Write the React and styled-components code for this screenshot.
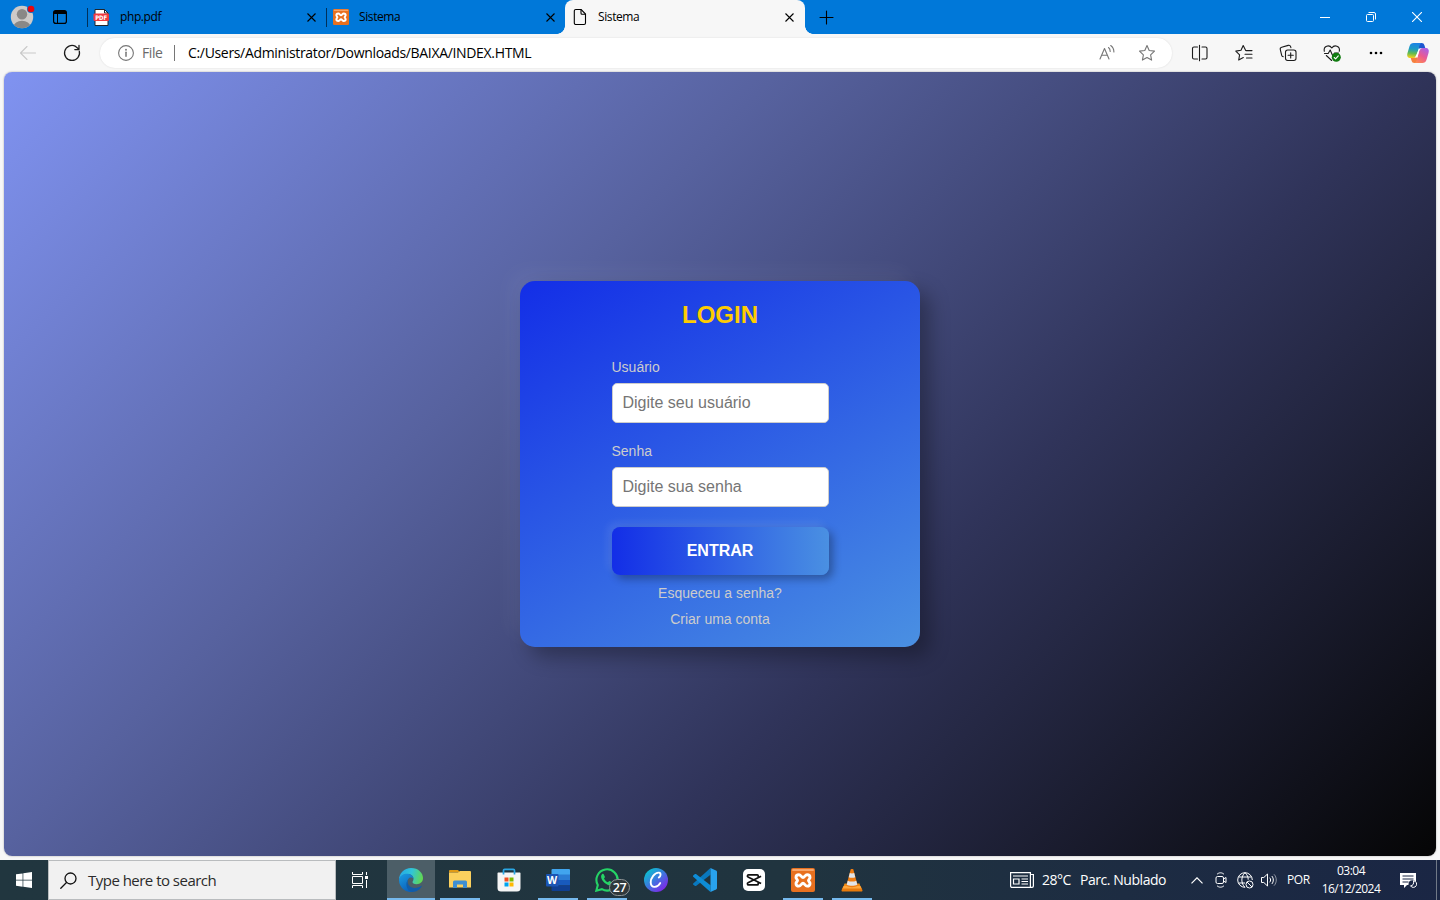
import React from 'react';
import styled, { createGlobalStyle, css } from 'styled-components';

const GlobalStyle = createGlobalStyle`
  * { box-sizing: border-box; }
  html, body { margin: 0; padding: 0; overflow: hidden; }
  body { background: #f7f7f7; font-family: 'Open Sans', 'Noto Sans', sans-serif; }
  svg { display: block; flex: none; }
`;

const Screen = styled.div`
  width: 1440px;
  height: 900px;
  display: flex;
  flex-direction: column;
  background: #f7f7f7;
`;

/* ---------- Browser tabs ---------- */
const TabStrip = styled.header`
  height: 34px;
  display: flex;
  background: #0078d9;
  color: #000;
`;
const TabActions = styled.div`
  width: 87px;
  display: flex;
  align-items: center;
  padding-left: 10px;
  gap: 18px;
`;
const Tab = styled.div`
  width: ${(p) => (p.$active ? 240 : 239)}px;
  height: 34px;
  display: flex;
  align-items: center;
  position: relative;
  padding: 0 ${(p) => (p.$active ? 11 : 10)}px 0 ${(p) => (p.$active ? 7 : 6)}px;
  font-size: 12px;
  ${(p) =>
    p.$active
      ? css`
          background: #f7f7f7;
          border-radius: 8px 8px 0 0;
          &::before, &::after {
            content: '';
            position: absolute;
            bottom: 0;
            width: 8px;
            height: 8px;
          }
          &::before { left: -8px; background: radial-gradient(circle at 0 0, transparent 7.5px, #f7f7f7 8px); }
          &::after { right: -8px; background: radial-gradient(circle at 100% 0, transparent 7.5px, #f7f7f7 8px); }
        `
      : css`
          &::before {
            content: '';
            position: absolute;
            left: 0;
            top: 8px;
            width: 1px;
            height: 19px;
            background: #00305a;
          }
        `}
`;
const TabIcon = styled.div`
  padding-left: 1px;
`;
const TabTitle = styled.span`
  flex: 1;
  margin-left: 10px;
  line-height: 16px;
  letter-spacing: -0.4px;
`;
const NewTab = styled.div`
  display: flex;
  align-items: center;
  margin-left: 13px;
`;
const WindowControls = styled.div`
  display: flex;
  margin-left: auto;
`;
const WindowButton = styled.div`
  width: 46px;
  display: flex;
  align-items: center;
  justify-content: center;
`;
const CloseIcon = styled.svg`
  margin-top: 1px;
`;

/* ---------- Browser toolbar ---------- */
const Toolbar = styled.div`
  height: 38px;
  display: flex;
  align-items: center;
  background: #f7f7f7;
`;
const NavButton = styled.div`
  width: 44px;
  display: flex;
  justify-content: center;
  &:first-child { margin-left: 6px; }
`;
const AddressBar = styled.div`
  width: 1072px;
  height: 30px;
  margin: 0 6px;
  display: flex;
  align-items: center;
  padding: 0 15px 0 18px;
  border-radius: 15px;
  background: #fff;
  box-shadow: 0 0 2px rgba(0, 0, 0, 0.12);
  font-size: 14px;
  line-height: 20px;
`;
const FileLabel = styled.span`
  width: 32px;
  margin-left: 8px;
  padding-bottom: 1px;
  color: #6a6a6a;
  letter-spacing: -0.4px;
`;
const AddressDivider = styled.span`
  width: 1px;
  height: 16px;
  margin-right: 13px;
  background: #767676;
`;
const Url = styled.span`
  flex: 1;
  padding-bottom: 1px;
  color: #000;
  letter-spacing: -0.33px;
`;
const AddressIcons = styled.div`
  display: flex;
  gap: 20px;
`;
const ToolButton = styled.div`
  width: ${(p) => p.$w || 44}px;
  display: flex;
  justify-content: center;
`;

/* ---------- Login page ---------- */
const Page = styled.main`
  width: 1432px;
  height: 784px;
  margin: 0 4px 4px;
  display: flex;
  align-items: center;
  justify-content: center;
  border-radius: 8px;
  background: linear-gradient(135deg, #8093f1 0%, #57629f 35%, #30345a 64%, #050505 100%);
  box-shadow: 0 0 2px rgba(0, 0, 0, 0.35);
  font-family: Arial, 'Liberation Sans', sans-serif;
`;
const Card = styled.section`
  width: 400px;
  height: 366px;
  padding: 20px;
  display: flex;
  flex-direction: column;
  align-items: center;
  border-radius: 15px;
  background: linear-gradient(150deg, #132ee7, #4a90e2);
  box-shadow: 10px 10px 20px rgba(0, 0, 0, 0.3), -10px -10px 20px rgba(255, 255, 255, 0.05);
`;
const Title = styled.h1`
  margin: 0 0 30px;
  color: #fc0;
  font-size: 24px;
  line-height: 28px;
`;
const Form = styled.form`
  width: 217px;
  display: flex;
  flex-direction: column;
`;
const Label = styled.label`
  margin-bottom: 8px;
  color: #ccc;
  font-size: 14px;
  line-height: 16px;
`;
const Input = styled.input`
  width: 100%;
  height: 40px;
  margin: 0 0 20px;
  padding: 10px;
  border: 1px solid #ccc;
  border-radius: 5px;
  background: #fff;
  font: 16px Arial, 'Liberation Sans', sans-serif;
  &::placeholder { color: #757575; }
`;
const Submit = styled.button`
  height: 48px;
  margin: 0 0 10px;
  border: 0;
  border-radius: 8px;
  background: linear-gradient(90deg, #132ee7, #4a90e2);
  box-shadow: 4px 4px 8px rgba(0, 0, 0, 0.3), -4px -4px 8px rgba(255, 255, 255, 0.1);
  color: #fff;
  font: bold 16px Arial, 'Liberation Sans', sans-serif;
`;
const Link = styled.a`
  margin-bottom: 10px;
  color: #ccc;
  font-size: 14px;
  line-height: 16px;
  text-align: center;
`;

/* ---------- Taskbar ---------- */
const Taskbar = styled.footer`
  height: 40px;
  display: flex;
  background: linear-gradient(90deg, #21363f 0%, #20343f 55%, #1d2c42 78%, #1a2644 100%);
  color: #fff;
`;
const StartButton = styled.div`
  width: 48px;
  display: flex;
  align-items: center;
  justify-content: center;
`;
const SearchBox = styled.div`
  width: 288px;
  display: flex;
  align-items: center;
  gap: 11px;
  padding-left: 11px;
  border: 1px solid #b9bcbe;
  background: #f1f1f1;
  color: #2b2b2b;
  font-size: 15px;
  letter-spacing: -0.52px;
`;
const TaskView = styled(StartButton)`
  width: 51px;
  padding-right: 3px;
`;
const Apps = styled.div`
  display: flex;
  gap: 1px;
`;
const AppButton = styled.div`
  width: 48px;
  height: 40px;
  position: relative;
  display: flex;
  align-items: center;
  justify-content: center;
  background: ${(p) => (p.$active ? '#4c5e67' : 'transparent')};
  &::after {
    content: '';
    display: ${(p) => (p.$open || p.$active ? 'block' : 'none')};
    position: absolute;
    bottom: 0;
    left: ${(p) => (p.$active ? 0 : 4)}px;
    right: ${(p) => (p.$active ? 0 : 4)}px;
    height: 2px;
    background: #76b9ed;
  }
`;
const Badge = styled.span`
  position: absolute;
  left: 26px;
  top: 19px;
  width: 21px;
  height: 17px;
  border: 1px solid #8e9496;
  border-radius: 9px;
  background: #30383b;
  font-size: 12.5px;
  font-weight: 600;
  line-height: 15px;
  text-align: center;
  letter-spacing: -0.5px;
`;
const Tray = styled.div`
  display: flex;
  align-items: center;
  margin-left: auto;
`;
const Weather = styled.div`
  width: 176px;
  display: flex;
  align-items: center;
  font-size: 14px;
  line-height: 20px;
  svg { margin-right: 8px; }
`;
const Degrees = styled.span`
  width: 38px;
  padding-bottom: 1px;
  letter-spacing: -0.5px;
`;
const Condition = styled.span`
  padding-bottom: 1px;
  white-space: nowrap;
  letter-spacing: -0.45px;
`;
const TrayIcon = styled.div`
  width: ${(p) => p.$w || 24}px;
  display: flex;
  justify-content: center;
`;
const Language = styled.span`
  width: 37px;
  padding: 0 0 1px 6px;
  font-size: 12px;
  letter-spacing: -0.4px;
`;
const Clock = styled.div`
  width: 66px;
  font-size: 12px;
  line-height: 18px;
  text-align: center;
  letter-spacing: -0.5px;
`;
const Notifications = styled.div`
  width: 52px;
  display: flex;
  justify-content: center;
  padding-right: 4px;
`;
const ShowDesktop = styled.div`
  width: 4px;
  height: 40px;
  border-left: 1px solid #707987;
`;

/* ---------- Icons ---------- */
const Close = () => (
  <CloseIcon width="9" height="9" viewBox="0 0 9 9" stroke="currentColor" strokeWidth="1.1">
    <path d="M.5.5l8 8M8.500.5l-8 8" />
  </CloseIcon>
);
const Line = ({ size = 20, w = 1.1, color = '#1b1b1b', children }) => (
  <svg width={size} height={size} viewBox={`0 0 ${size} ${size}`} fill="none" stroke={color} strokeWidth={w} strokeLinecap="round" strokeLinejoin="round">
    {children}
  </svg>
);
const Avatar = () => (
  <svg width="25" height="26" viewBox="0 0 25 26">
    <defs><clipPath id="av"><circle cx="12" cy="13" r="11.2" /></clipPath></defs>
    <circle cx="12" cy="13" r="11.2" fill="#cdcac8" />
    <g clipPath="url(#av)" fill="#8a8886">
      <circle cx="12" cy="10.3" r="5.2" />
      <ellipse cx="12" cy="22.5" rx="8.3" ry="5.7" />
    </g>
    <circle cx="21" cy="5" r="4" fill="#0078d9" />
    <circle cx="21" cy="5" r="3.3" fill="#e8060f" />
  </svg>
);
const TabMenu = () => (
  <svg width="14" height="14" viewBox="0 0 14 14">
    <rect x=".6" y=".6" width="12.8" height="12.8" rx="2.2" fill="none" stroke="#000" strokeWidth="1.2" />
    <path d="M.6 4V2.8A2.2 2.2 0 0 1 2.8.6h8.4a2.2 2.2 0 0 1 2.2 2.2V4z" />
    <path d="M4.5 4v9" stroke="#000" />
  </svg>
);
const PdfIcon = () => (
  <svg width="17" height="17" viewBox="0 0 17 17">
    <path d="M2 .5h9.5L15 4v12.5H2z" fill="#fff" stroke="#20252c" />
    <path d="M11.5.5V4H15z" fill="#fff" stroke="#20252c" />
    <rect x=".5" y="4.500" width="15.5" height="7.500" rx="1" fill="#f03a3e" />
    <text x="8.2" y="10.6" fill="#fff" fontSize="6.2" fontWeight="bold" fontFamily="DejaVu Sans, sans-serif" textAnchor="middle" textLength="12" lengthAdjust="spacingAndGlyphs">PDF</text>
  </svg>
);
const Xampp = ({ size }) => (
  <svg width={size} height={size} viewBox="0 0 24 24">
    <rect width="24" height="24" rx="2" fill="#e8701f" />
    <rect x="1" y="1" width="22" height="2" rx="1" fill="#f7a56a" />
    <path d="M8 6.700C9.700 6.700 10.500 9.500 12 9.500S14.300 6.700 16 6.700c1.800 0 3 1.200 3 2.700 0 1.400-1.500 1.900-1.500 3s1.500 1.600 1.500 3c0 1.500-1.200 2.700-3 2.700-1.700 0-2.500-2.800-4-2.800s-2.300 2.800-4 2.800c-1.800 0-3-1.200-3-2.700 0-1.400 1.500-1.900 1.500-3S5 10.800 5 9.400c0-1.500 1.200-2.700 3-2.700z" fill="none" stroke="#fff" strokeWidth="2.9" />
  </svg>
);
const DocIcon = () => (
  <svg width="16" height="18" viewBox="0 0 16 18" fill="none" stroke="#000" strokeWidth="1.1">
    <path d="M3.800 1.500h5.400L13.500 6v9a1.500 1.500 0 0 1-1.500 1.500H3.800A1.500 1.500 0 0 1 2.300 15V3a1.500 1.500 0 0 1 1.500-1.500z" />
    <path d="M9 1.800v3.400a1 1 0 0 0 1 1h3.300" />
  </svg>
);
const star = 'M10 2.6l2.2 4.9 5.3.6-3.9 3.7 1 5.3L10 14.5l-4.6 2.6 1-5.3-3.900-3.700 5.300-.6z';
const ribbon = 'M8.500 22H16.300c2.200 0 3.500-1 4.200-3.200l2-6.700c.9-3-.2-5-3-5h-2.700c-2 0-3 .9-3.600 2.900l-2.100 7.500C10.500 19.600 9.900 21.300 8.500 22z';
const Copilot = () => (
  <svg width="24" height="24" viewBox="0 0 24 24">
    <defs>
      <linearGradient id="c1" x1=".3" y1="1" x2=".5" y2="0"><stop offset="0" stopColor="#1b8fe8" /><stop offset=".35" stopColor="#1b93cf" /><stop offset=".65" stopColor="#55b86a" /><stop offset="1" stopColor="#f5cf1b" /></linearGradient>
      <linearGradient id="c2" x1=".8" y1="0" x2=".2" y2="1"><stop offset="0" stopColor="#a861e8" /><stop offset=".5" stopColor="#ea5a92" /><stop offset="1" stopColor="#ff8951" /></linearGradient>
    </defs>
    <path d="M11 2h4.500c1.700 0 2.500.8 3 2.500l.8 2.600h-2.600c-1.900 0-2.900.7-3.500 2.500z" fill="#1c56d0" />
    <path d="M13 22H8.500c-1.700 0-2.500-.8-3-2.500l-.8-2.600h2.600c1.900 0 2.900-.7 3.500-2.500z" fill="#f5803e" />
    <path d={ribbon} transform="rotate(180 12 12)" fill="url(#c1r)" />
    <defs>
      <linearGradient id="c1r" x1=".5" y1="1" x2=".6" y2="0"><stop offset="0" stopColor="#1c82e6" /><stop offset=".4" stopColor="#1b9bc4" /><stop offset=".7" stopColor="#62bb50" /><stop offset="1" stopColor="#f5cf1b" /></linearGradient>
    </defs>
    <path d={ribbon} fill="url(#c2)" />
    <path d="M13.200 7.500h2.300c-1.200.5-1.900 1.300-2.300 2.500l-1.900 6.400H9z" fill="#fff" />
  </svg>
);
const WinLogo = () => (
  <svg width="16" height="16" viewBox="0 0 16 16" fill="#fff">
    <path d="M0 2.300l6.600-.9v6.300H0zM7.300 1.300L16 0v7.700H7.300zM0 8.400h6.600v6.300L0 13.800zM7.300 8.400H16V16l-8.700-1.200z" />
  </svg>
);
const EdgeLogo = () => (
  <svg width="24" height="24" viewBox="0 0 24 24">
    <defs>
      <linearGradient id="e1" x1="0" y1=".3" x2="1" y2=".5"><stop offset="0" stopColor="#25a8e6" /><stop offset=".5" stopColor="#31c5d8" /><stop offset="1" stopColor="#62d850" /></linearGradient>
      <linearGradient id="e2" x1="0" y1="0" x2=".5" y2="1"><stop offset="0" stopColor="#1b9de2" /><stop offset="1" stopColor="#0c62bc" /></linearGradient>
    </defs>
    <path d="M0 12C0 5 5.300 0 12 0c7.500 0 12 5 12 10 0 4-3 6.200-6.300 6.200-3 0-4.200-1.300-4.200-2.300 0-.8 1-1.200 1-3C14.500 8 12 6 8.500 6 4 6 1 9 0 12z" fill="url(#e1)" />
    <path d="M0 12c.3-4 4-6.300 8-6.300 3.500 0 6.500 2.200 6.500 5.200-1-1.400-2.300-1.800-3.600-1.300C7 11 7.500 20.500 15 23.600A12 12 0 0 1 0 12z" fill="url(#e2)" />
    <path d="M9.400 11C7 14.500 10 19.500 15 20c3 .3 5.500-.8 7.200-2.200.4-.3.8 0 .5.500C21 21.500 17.500 24 13.700 24 7.500 23.300 5.500 15 9.400 11z" fill="#115ca9" />
  </svg>
);
const Explorer = () => (
  <svg width="22" height="20" viewBox="0 0 22 20">
    <path d="M0 2.500V1.200C0 .5.500 0 1.200 0H9l2 2.500z" fill="#e09a16" />
    <path d="M0 2.500h9l2-1.500h10a1 1 0 0 1 1 1V17.500H0z" fill="#fbd05e" />
    <path d="M4 12a1.500 1.500 0 0 1 1.500-1.500h11A1.500 1.500 0 0 1 18 12v6h-4v-3.500H8V18H4z" fill="#3e8fd2" />
  </svg>
);
const Store = () => (
  <svg width="24" height="24" viewBox="0 0 24 24">
    <path d="M.5 5.500c0-.6.400-1 1-1h21c.6 0 1 .4 1 1V20a3.500 3.500 0 0 1-3.500 3.500H4A3.500 3.500 0 0 1 .5 20z" fill="#f6f6f6" />
    <path d="M6.500 6.500V2.500a1.200 1.200 0 0 1 1.200-1.200h8.600a1.200 1.200 0 0 1 1.200 1.200v4" fill="none" stroke="#2aa7e5" strokeWidth="1.700" />
    <path d="M7.500 9.500h4v4h-4z" fill="#f25022" /><path d="M12.500 9.500h4v4h-4z" fill="#7fba00" />
    <path d="M7.500 14.500h4v4h-4z" fill="#00a4ef" /><path d="M12.500 14.500h4v4h-4z" fill="#ffb900" />
  </svg>
);
const Word = () => (
  <svg width="24" height="22" viewBox="0 0 24 22">
    <path d="M6.500 0H23a1 1 0 0 1 1 1v5H5.500V1a1 1 0 0 1 1-1z" fill="#41a5ee" />
    <path d="M5.500 5.500H24V11H5.500z" fill="#2b7cd3" /><path d="M5.500 11H24v5.500H5.500z" fill="#185abd" />
    <path d="M5.500 16.500H24V21a1 1 0 0 1-1 1H6.500a1 1 0 0 1-1-1z" fill="#103f91" />
    <rect y="5" width="12.500" height="12.500" rx="1" fill="#1b55b4" />
    <text x="6.200" y="15" fill="#fff" fontFamily="Open Sans, sans-serif" fontSize="10.500" fontWeight="bold" textAnchor="middle">W</text>
  </svg>
);
const WhatsApp = () => (
  <svg width="24" height="24" viewBox="0 0 24 24">
    <path d="M1.300 22.700l1.500-5.600A10.600 10.600 0 1 1 6.900 21.200z" fill="none" stroke="#25d366" strokeWidth="2.100" />
    <path d="M8.700 6.300c-.3-.6-.9-.7-1.500-.2-3.300 3 1.300 9.300 5.800 10.900 2.300.8 4.300-.4 4.300-2.200 0-.5-2.400-1.700-3-1.700-.5 0-.9 1.300-1.400 1.200-1.500-.4-3.400-2.300-3.900-3.700-.1-.5 1.100-1 1-1.600z" fill="#25d366" />
  </svg>
);
const Canva = () => (
  <svg width="24" height="24" viewBox="0 0 24 24">
    <defs><linearGradient id="cv" x1=".1" y1=".1" x2=".8" y2=".9"><stop offset="0" stopColor="#08c5cf" /><stop offset=".5" stopColor="#3c79df" /><stop offset="1" stopColor="#7c2ae8" /></linearGradient></defs>
    <circle cx="12" cy="12" r="12" fill="url(#cv)" />
    <path d="M14.800 9.500c1.900-.6 2.600-4.600.2-4.900-4.300-.4-8.500 5.700-8.300 9.900.1 2.900 1.700 4.600 4 4.400 2.700-.2 4.500-1.900 5.500-3.800" fill="none" stroke="#fff" strokeWidth="1.900" strokeLinecap="round" />
  </svg>
);
const VsCode = () => (
  <svg width="24" height="24" viewBox="0 0 24 24">
    <path d="M17.500 0v6.800L3 18l-1 .1-1.800-1.600c-.3-.4-.3-.8 0-1.100z" fill="#0978be" />
    <path d="M17.500 24v-6.800L3 6.100l-1-.1L.2 7.600c-.3.300-.3.700 0 1.100z" fill="#0e8cd6" />
    <path d="M17.500 0L23 2.500c.6.300 1 .8 1 1.500v16c0 .7-.4 1.200-1 1.500L17.500 24z" fill="#28a2ee" />
  </svg>
);
const CapCut = () => (
  <svg width="22" height="22" viewBox="0 0 22 22">
    <rect width="22" height="22" rx="5" fill="#fff" />
    <path d="M4.500 8V6.800c0-.6.400-1 1-1h8.700c.6 0 1 .4 1 1V8M4.500 13.700v1.200c0 .6.400 1 1 1h8.700c.6 0 1-.4 1-1v-1.200M4.500 7.700l13.600 6.800M4.500 14L18.100 7.200" fill="none" stroke="#111" strokeWidth="1.700" />
  </svg>
);
const Vlc = () => (
  <svg width="22" height="24" viewBox="0 0 22 24">
    <path d="M3.500 15.500h15l2 6H1.500z" fill="#f08a13" />
    <path d="M1.500 19.500h19l1 3c0 .6-.4 1-1 1h-19c-.6 0-1-.4-1-1z" fill="#e87a0c" />
    <path d="M2.500 18h17l.8 2.500H1.700z" fill="#ffa73c" />
    <path d="M9.700 1.300c.5-.5 2.100-.5 2.600 0L16.700 17.800c-2.500 1.800-8.900 1.800-11.400 0z" fill="#f07d12" />
    <path d="M8.800 5c1.400.5 3 .5 4.400 0l1.100 4.200c-2 .8-4.600.8-6.600 0zM6.700 12.700c2.500 1.200 6.100 1.200 8.600 0l1 4c-3 1.500-7.600 1.500-10.600 0z" fill="#e2e5e8" />
  </svg>
);

const Login = () => (
  <Page>
    <Card>
      <Title>LOGIN</Title>
      <Form>
        <Label>Usuário</Label>
        <Input placeholder="Digite seu usuário" />
        <Label>Senha</Label>
        <Input type="password" placeholder="Digite sua senha" />
        <Submit type="button">ENTRAR</Submit>
        <Link>Esqueceu a senha?</Link>
        <Link>Criar uma conta</Link>
      </Form>
    </Card>
  </Page>
);

const BrowserTabs = () => (
  <TabStrip>
    <TabActions><Avatar /><TabMenu /></TabActions>
    <Tab><PdfIcon /><TabTitle>php.pdf</TabTitle><Close /></Tab>
    <Tab><TabIcon><Xampp size={16} /></TabIcon><TabTitle>Sistema</TabTitle><Close /></Tab>
    <Tab $active><DocIcon /><TabTitle>Sistema</TabTitle><Close /></Tab>
    <NewTab><Line size={17} color="#000"><path d="M8.500 2v13M2 8.500h13" /></Line></NewTab>
    <WindowControls>
      <WindowButton><svg width="10" height="10"><path d="M0 5.500h10" stroke="#fff" /></svg></WindowButton>
      <WindowButton>
        <svg width="10" height="10" fill="none" stroke="#fff"><rect x=".5" y="2.500" width="7" height="7" rx="1" /><path d="M2.500.5H8A1.500 1.500 0 0 1 9.500 2v5.500" /></svg>
      </WindowButton>
      <WindowButton><svg width="10" height="10" stroke="#fff" strokeWidth="1.100"><path d="M0 0l10 10M10 0L0 10" /></svg></WindowButton>
    </WindowControls>
  </TabStrip>
);

const BrowserToolbar = () => (
  <Toolbar>
    <NavButton><Line color="#c9c9c9"><path d="M17.500 10H2.500M9 3.500L2.500 10 9 16.500" /></Line></NavButton>
    <NavButton><Line w={1.25}><path d="M17.300 8.200A7.500 7.500 0 1 1 13.600 3.400L17 6.300M17 2.300v4.200h-4.200" /></Line></NavButton>
    <AddressBar>
      <Line size={16} color="#767676"><circle cx="8" cy="8" r="7.400" /><path d="M8 7.300v4" strokeWidth="1.500" /><circle cx="8" cy="4.700" r=".4" /></Line>
      <FileLabel>File</FileLabel>
      <AddressDivider />
      <Url>C:/Users/Administrator/Downloads/BAIXA/INDEX.HTML</Url>
      <AddressIcons>
        <Line color="#767676"><path d="M3 16L7.500 5.500 12 16M4.700 12.200h5.600M11.500 4.500c1.200.9 1.700 2.200 1.700 3.900M13.700 2.500c2.200 1.500 3.200 3.800 3.200 6.500" /></Line>
        <Line color="#767676"><path d={star} /></Line>
      </AddressIcons>
    </AddressBar>
    <ToolButton><Line><path d="M7.500 4H4a1.500 1.500 0 0 0-1.500 1.500v9A1.500 1.500 0 0 0 4 16h3.500M12 4h3.500a1.500 1.500 0 0 1 1.500 1.500v9A1.500 1.500 0 0 1 15.500 16H12M9.500 2.300v15.400" /></Line></ToolButton>
    <ToolButton><Line><path d="M11.700 7.500L9.200 2.600 7 7.300l-5.200.8 3.800 3.700-.9 5.200 4.600-2.400M12 7.600h6M11 11.300h7M12.500 15h5.500" /></Line></ToolButton>
    <ToolButton><Line><rect x="7.500" y="7" width="10.500" height="10.500" rx="2.200" /><path d="M12.700 9.700v5.200M10.100 12.300h5.200M5.300 13.700c-.8-.1-1.400-.6-1.600-1.400L2.300 6.700A2 2 0 0 1 3.700 4.300l6.500-1.900c1.200-.3 2.100.3 2.400 1.300l.3 1" /></Line></ToolButton>
    <ToolButton>
      <Line>
        <path d="M2.300 8.300C1.200 2.800 7.200 1.300 9.800 5c2.600-3.700 8.600-2.200 7.500 3.300M2.500 10.500h3.700L8.200 7l2.600 6 1.700-3h4M4.300 12.500l5.400 5" />
        <circle cx="14.300" cy="14.300" r="4.500" fill="#107c10" stroke="none" />
        <path d="M12.200 14.500l1.400 1.300 2.700-3" stroke="#fff" />
      </Line>
    </ToolButton>
    <ToolButton><svg width="14" height="4"><circle cx="2" cy="2" r="1.300" /><circle cx="7" cy="2" r="1.300" /><circle cx="12" cy="2" r="1.300" /></svg></ToolButton>
    <ToolButton $w={40}><Copilot /></ToolButton>
  </Toolbar>
);

const WindowsTaskbar = () => (
  <Taskbar>
    <StartButton><WinLogo /></StartButton>
    <SearchBox>
      <Line size={17} w={1.300} color="#111"><circle cx="10.500" cy="6.500" r="5.500" /><path d="M6.500 10.500L.8 16.200" /></Line>
      Type here to search
    </SearchBox>
    <TaskView>
      <svg width="17" height="16" fill="none" stroke="#fff"><path d="M.5 0v2.500h10V0M.5 16v-2.500h10V16M.5 4.500h10v7H.5zM14.500 0v3M14.500 8v8" /><path d="M13 4h3v3h-3z" fill="#fff" stroke="none" /></svg>
    </TaskView>
    <Apps>
      <AppButton $active><EdgeLogo /></AppButton>
      <AppButton $open><Explorer /></AppButton>
      <AppButton><Store /></AppButton>
      <AppButton $open><Word /></AppButton>
      <AppButton $open><WhatsApp /><Badge>27</Badge></AppButton>
      <AppButton><Canva /></AppButton>
      <AppButton><VsCode /></AppButton>
      <AppButton><CapCut /></AppButton>
      <AppButton $open><Xampp size={24} /></AppButton>
      <AppButton $open><Vlc /></AppButton>
    </Apps>
    <Tray>
      <Weather>
        <svg width="24" height="16" fill="none" stroke="#fff" strokeWidth="1.200"><path d="M.6.600h19.800v14.800H2a1.400 1.400 0 0 1-1.400-1.400zM20.400 2.500h3V14a1.400 1.400 0 0 1-1.400 1.400h-2M3 4h15M11.500 7H18M11.500 9.500H18M11.500 12H18M3.500 7h5.500v5H3.500z" /></svg>
        <Degrees>28°C</Degrees>
        <Condition>Parc. Nublado</Condition>
      </Weather>
      <TrayIcon $w={22}><svg width="12" height="7" fill="none" stroke="#fff" strokeWidth="1.200"><path d="M.5 6.300L6 .8l5.500 5.500" /></svg></TrayIcon>
      <TrayIcon $w={25}><svg width="12" height="16" fill="none" stroke="#fff"><rect x="1" y="4.500" width="7.500" height="7" rx="1.500" /><path d="M8.500 7l2.500-1.500v5L8.500 9M2 2.300C4 .3 7 .3 9 2.300M2 13.700c2 2 5 2 7 0" /></svg></TrayIcon>
      <TrayIcon $w={24}>
        <svg width="17" height="17" fill="none" stroke="#fff"><path d="M15.300 8A7.300 7.300 0 1 0 8 15.300M8 .7C3.800 4.500 3.800 11.500 8 15.300M8 .7c2.200 2 3.300 4.500 3.200 7M1.500 5h13M1.500 11H8" /><circle cx="12.500" cy="12.500" r="3.500" /><path d="M10 10l5 5" /></svg>
      </TrayIcon>
      <TrayIcon $w={24}>
        <svg width="16" height="14" fill="none" stroke="#fff"><path d="M.5 4.500h2.300L6.500 1v12L2.800 9.500H.5zM8.700 4.700c1.200 1.400 1.200 3.200 0 4.600M10.800 3c2 2.300 2 5.700 0 8" /><path d="M13 1.300c3 3.200 3 8.200 0 11.400" opacity=".5" /></svg>
      </TrayIcon>
      <Language>POR</Language>
      <Clock>03:04<br />16/12/2024</Clock>
      <Notifications>
        <svg width="17" height="17"><path d="M0 1h16v12H7l-3 3v-3H0z" fill="#fff" /><path d="M2.500 4h11M2.500 7h11M2.500 10h6" stroke="#1a2644" /><circle cx="12.500" cy="12.300" r="4" fill="#1a2644" /><path d="M13.500 8.800a3.300 3.300 0 1 1-3 5c2.200.2 3.700-2 3-5z" fill="none" stroke="#fff" /></svg>
      </Notifications>
      <ShowDesktop />
    </Tray>
  </Taskbar>
);

export default function App() {
  return (
    <>
      <GlobalStyle />
      <Screen>
        <BrowserTabs />
        <BrowserToolbar />
        <Login />
        <WindowsTaskbar />
      </Screen>
    </>
  );
}
